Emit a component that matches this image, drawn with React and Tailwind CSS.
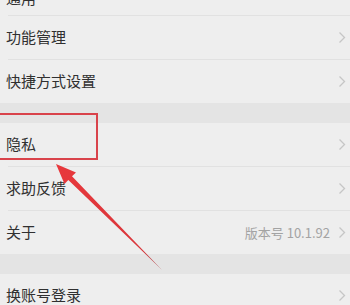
import React from 'react';

const font = { fontFamily: '"Noto Sans CJK SC", "Noto Sans", sans-serif' };

function Chevron() {
  return (
    <svg width="8" height="13" viewBox="0 0 8 13" className="shrink-0">
      <path d="M1.5 1.5 L6.5 6.5 L1.5 11.5" fill="none" stroke="#c6c6c6" strokeWidth="1.3" />
    </svg>
  );
}

function Row({ label, extra }) {
  return (
    <div className="h-[43px] flex items-center justify-between pl-[6px] pr-[4px] bg-[#eeeeee]">
      <span className="text-[15px] text-[#303030]">{label}</span>
      <div className="flex items-center gap-[8px]">
        {extra && <span className="text-[13px] text-[#a3a3a3]">{extra}</span>}
        <Chevron />
      </div>
    </div>
  );
}

const Sep = () => (
  <div className="h-px bg-[#eeeeee]">
    <div className="ml-[8px] h-px bg-[#e1e1e1]" />
  </div>
);

const Gap = () => <div className="h-[20px] bg-[#e4e4e4]" />;

export default function App() {
  return (
    <div className="relative w-[350px] h-[305px] overflow-hidden bg-[#eeeeee]" style={font}>
      <div className="flex flex-col">
        <div className="h-[15px] overflow-hidden pl-[6px] bg-[#eeeeee]">
          <div className="-mt-[13px] text-[15px] text-[#303030]">通用</div>
        </div>
        <Sep />
        <Row label="功能管理" />
        <Sep />
        <Row label="快捷方式设置" />
        <Gap />
        <Row label="隐私" />
        <Sep />
        <Row label="求助反馈" />
        <Sep />
        <Row label="关于" extra="版本号 10.1.92" />
        <Gap />
        <Row label="换账号登录" />
      </div>

      {/* red highlight box */}
      <div className="absolute left-[-3px] top-[113px] w-[101px] h-[47px] border-2 border-[#d9434b]" />

      {/* arrow */}
      <svg className="absolute left-0 top-0" width="350" height="305">
        <defs>
          <linearGradient id="ar" x1="56" y1="164" x2="162" y2="270" gradientUnits="userSpaceOnUse">
            <stop offset="0" stopColor="#e8383c" />
            <stop offset="0.8" stopColor="#d9363b" />
            <stop offset="1" stopColor="#a8464a" />
          </linearGradient>
        </defs>
        <polygon
          points="56,164 76,172.5 72,176.3 162,270 68.3,180 64.5,184"
          fill="url(#ar)"
        />
      </svg>
    </div>
  );
}
